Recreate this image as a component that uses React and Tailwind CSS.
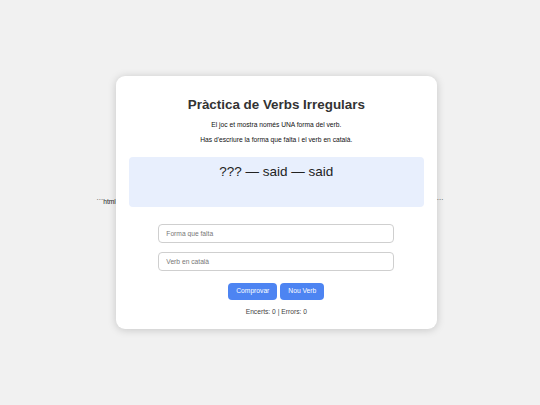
import React, { useState } from 'react'

const font = { fontFamily: '"Liberation Sans", Arial, sans-serif' }

export default function App() {
  const [forma, setForma] = useState('')
  const [verb, setVerb] = useState('')
  const [score] = useState({ ok: 0, ko: 0 })

  return (
    <div
      className="min-h-[405px] w-full bg-[#f1f1f1] flex items-center justify-center text-[6.7px] text-[#222]"
      style={font}>
      <span>```html</span>

      <div className="w-[321px] shrink-0 bg-white rounded-[9px] shadow-[0_1px_8px_rgba(0,0,0,0.18)] px-[13px] pt-[13px] pb-[13px] flex flex-col items-center">
        <h1 className="mt-[8px] text-[13.4px] leading-[15px] font-bold text-[#333]">
          Pràctica de Verbs Irregulars
        </h1>
        <p className="mt-[9px] leading-[8px] text-[#111]">
          El joc et mostra només UNA forma del verb.
        </p>
        <p className="mt-[7px] leading-[8px] text-[#111]">
          Has d'escriure la forma que falta i el verb en català.
        </p>

        <div className="mt-[13px] w-full h-[50px] rounded-[4px] bg-[#e8effd] flex justify-center pt-[7px]">
          <span className="text-[13.5px] leading-[16px] text-[#222]">
            ??? — said — said
          </span>
        </div>

        <input
          value={forma}
          onChange={e => setForma(e.target.value)}
          placeholder="Forma que falta"
          className="mt-[17px] w-[236px] h-[19px] rounded-[4px] border border-[#cfcfcf] px-[7px] text-[6.7px] outline-none placeholder:text-[#777]"
        />
        <input
          value={verb}
          onChange={e => setVerb(e.target.value)}
          placeholder="Verb en català"
          className="mt-[9px] w-[236px] h-[19px] rounded-[4px] border border-[#cfcfcf] px-[7px] text-[6.7px] outline-none placeholder:text-[#777]"
        />

        <div className="mt-[12px] flex gap-[3px]">
          <button className="w-[49px] h-[17px] rounded-[4px] bg-[#4d84f2] text-white text-[6.7px]">
            Comprovar
          </button>
          <button className="w-[44px] h-[17px] rounded-[4px] bg-[#4d84f2] text-white text-[6.7px]">
            Nou Verb
          </button>
        </div>

        <p className="mt-[8px] leading-[8px] text-[#444]">
          Encerts: {score.ok} | Errors: {score.ko}
        </p>
      </div>

      <span>```</span>
    </div>
  )
}
